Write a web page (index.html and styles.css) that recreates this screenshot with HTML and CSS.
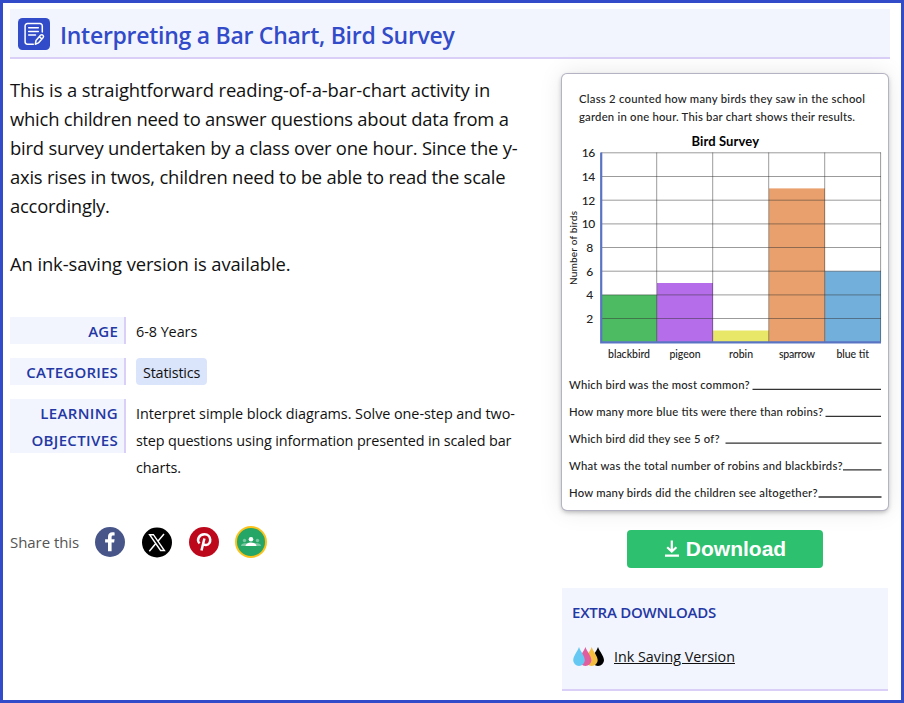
FILE: index.html
```
<!DOCTYPE html>
<html lang="en">
<head>
	<meta charset="UTF-8">
	<title>Interpreting a Bar Chart, Bird Survey</title>
	<link rel="stylesheet" href="styles.css">
</head>
<body>

<div class="page">
	<div class="header">
		<svg class="logo" width="32" height="32" viewBox="0 0 32 32">
			<rect width="32" height="32" rx="4.5" fill="#324bc8"/>
			<g fill="none" stroke="#fff" stroke-width="1.5" stroke-linecap="round" stroke-linejoin="round">
				<path d="M24.3 14V8a2.4 2.4 0 0 0-2.4-2.4H9.500A2.400 2.400 0 0 0 7.100 8v15.800a2.400 2.400 0 0 0 2.400 2.400h5.800"/>
				<path d="M10.700 9.800h9.600M10.700 13.400h9.600M10.700 17h6.800"/>
				<path d="M17.300 26.300l.7-3.800 4.700-5.400q1.300-.9 2.300.2 1 .9.200 2.100l-4.800 5.500zM21.300 18.800l2.500 2.100"/>
			</g>
		</svg>
		<h1>Interpreting a Bar Chart, Bird Survey</h1>
	</div>

	<div class="main">
		<div class="left">
			<div class="intro">
				<p><span class="first-line">This is a straightforward reading-of-a-bar-chart activity in</span><br>which children need to answer questions about data from a<br>bird survey undertaken by a class over one hour. Since the y-<br>axis rises in twos, children need to be able to read the scale<br>accordingly.</p>
				<p class="first-line">An ink-saving version is available.</p>
			</div>

			<div class="info">
				<div class="row">
					<div class="label">AGE</div>
					<div class="value">6-8 Years</div>
				</div>
				<div class="row">
					<div class="label">CATEGORIES</div>
					<div class="value"><a class="tag">Statistics</a></div>
				</div>
				<div class="row">
					<div class="label two-lines">LEARNING<br>OBJECTIVES</div>
					<div class="value">Interpret simple block diagrams. Solve one-step and two-<br><span class="tight">step questions using information presented in scaled bar</span><br>charts.</div>
				</div>
			</div>

			<div class="share">
				<span>Share this</span>
				<!-- facebook -->
				<svg width="32" height="32" viewBox="0 0 32 32">
					<circle cx="16" cy="16" r="15" fill="#475589"/>
					<path d="M14 25.300v-8.700h-2.900v-3.400H14v-2.500c0-2.900 1.700-4.500 4.400-4.500 1.100 0 2.200.2 2.200.2v3h-1.400c-1.200 0-1.600.7-1.600 1.500v2.300h3l-.5 3.400h-2.500v8.700z" fill="#fff"/>
				</svg>
				<!-- x -->
				<svg width="32" height="32" viewBox="0 0 32 32">
					<circle cx="16" cy="16.500" r="15" fill="#000"/>
					<path d="M8.600 8.700h3.800l11 15.800h-3.800z" fill="none" stroke="#fff" stroke-width="1.400"/>
					<path d="M23 8l-6.100 7.200M14.800 17.600L8.300 25.200" stroke="#fff" stroke-width="1.500"/>
				</svg>
				<!-- pinterest -->
				<svg width="32" height="32" viewBox="0 0 32 32">
					<circle cx="16" cy="16" r="15" fill="#bd081c"/>
					<path d="M11.600 17.300c-3.300-3.300-.8-9 5-9 6.900 0 7.500 10.300 1.500 10.700-1.600.1-2.700-.6-3-1.500M16.400 12.500l-2.900 12" fill="none" stroke="#fff" stroke-width="2.500" stroke-linecap="butt"/>
				</svg>
				<!-- classroom -->
				<svg width="32" height="32" viewBox="0 0 32 32">
					<circle cx="16" cy="16" r="15" fill="#25a566" stroke="#fcc21b" stroke-width="2"/>
					<g fill="#79c8a1"><circle cx="9.500" cy="14.500" r="1.700"/><circle cx="22.500" cy="14.500" r="1.700"/><path d="M6 20c0-2 2-2.800 4-2.700h12c2-.1 4 .7 4 2.700z"/></g>
					<circle cx="16" cy="13.200" r="2.300" fill="#fff"/>
					<path d="M10.600 20c0-2.300 2.600-3.500 5.400-3.500s5.400 1.200 5.400 3.500z" fill="#fff"/>
				</svg>
			</div>
		</div>

		<div class="right">
			<div class="sheet">
				<svg width="326" height="436" viewBox="562 74 326 436">
					<g class="sheet-text">
						<text x="579" y="103" textLength="286">Class 2 counted how many birds they saw in the school</text>
						<text x="579" y="120.500" textLength="276">garden in one hour. This bar chart shows their results.</text>
					</g>
					<text class="chart-title" x="691.500" y="146" textLength="67.500">Bird Survey</text>

					<!-- bars -->
					<rect x="601" y="294.900" width="56" height="47" fill="#4dbb62"/>
					<rect x="657" y="283" width="56" height="59" fill="#b56dea"/>
					<rect x="713" y="330.500" width="56" height="12" fill="#e9e767"/>
					<rect x="769" y="188.400" width="56" height="154" fill="#eaa06c"/>
					<rect x="825" y="271.200" width="56" height="71" fill="#72afdb"/>

					<!-- grid -->
					<path class="grid" d="M601 152.800H881M601 176.500H881M601 200.200H881M601 223.900H881M601 247.500H881M601 271.200H881M601 294.900H881M601 318.500H881M656.700 152.500V342M712.700 152.500V342M768.700 152.500V342M824.700 152.500V342M880.600 152.500V342"/>
					<path d="M601.200 152.500V342.300H881" fill="none" stroke="#5a74c4" stroke-width="2.200"/>

					<g class="scale">
						<text x="594.500" y="157">16</text>
						<text x="594.500" y="180.800">14</text>
						<text x="594.500" y="204.500">12</text>
						<text x="594.500" y="228">10</text>
						<text x="592.500" y="251.800">8</text>
						<text x="592.500" y="275.500">6</text>
						<text x="592.500" y="299.200">4</text>
						<text x="592.500" y="322.800">2</text>
					</g>
					<text class="axis" transform="translate(577 285) rotate(-90)" textLength="74">Number of birds</text>

					<g class="names">
						<text x="608" y="358.300" textLength="42">blackbird</text>
						<text x="669.500" y="358.300" textLength="31">pigeon</text>
						<text x="729" y="358.300" textLength="24">robin</text>
						<text x="779" y="358.300" textLength="36">sparrow</text>
						<text x="836.500" y="358.300" textLength="32.500">blue tit</text>
					</g>

					<g class="sheet-text">
						<text x="569" y="388.700" textLength="180.500">Which bird was the most common?</text>
						<text x="569" y="415.800" textLength="254">How many more blue tits were there than robins?</text>
						<text x="569" y="442.800" textLength="150.500">Which bird did they see 5 of?</text>
						<text x="569" y="469.800" textLength="273.500">What was the total number of robins and blackbirds?</text>
						<text x="569" y="496.800" textLength="248.500">How many birds did the children see altogether?</text>
					</g>
					<path d="M752.500 389.300H881M825.500 416.400H881M725.500 443.200H881.500M843 469.900H881.500M818.500 497H881.500" stroke="#333" stroke-width="1.300"/>
				</svg>
			</div>

			<a class="download">
				<svg width="16" height="18" viewBox="0 0 16 18">
					<path d="M7.800 .5v11M3.200 7.200l4.600 4.300 4.600-4.300M1 15.700h14" fill="none" stroke="#fff" stroke-width="2.200"/>
				</svg>
				<span>Download</span>
			</a>

			<div class="extra">
				<h2>EXTRA DOWNLOADS</h2>
				<div class="extra-item">
					<svg width="32" height="20" viewBox="0 0 32 20">
						<path d="M25 0c1.600 4.500 6 9.200 6 13.200a6 5.800 0 0 1-12 0C19 9.200 23.400 4.500 25 0z" fill="#000"/>
						<path d="M18.700 0c1.600 4.500 6 9.200 6 13.200a6 5.800 0 0 1-12 0C12.700 9.200 17.100 4.500 18.700 0z" fill="#f3bd42"/>
						<path d="M12.400 0c1.600 4.500 6 9.200 6 13.200a6 5.800 0 0 1-12 0C6.400 9.200 10.800 4.500 12.400 0z" fill="#e05da0"/>
						<path d="M6 0c1.600 4.500 5.800 9.200 5.800 13.200a5.800 5.800 0 0 1-11.600 0C.2 9.200 4.400 4.500 6 0z" fill="#65c8f2"/>
					</svg>
					<a>Ink Saving Version</a>
				</div>
			</div>
		</div>
	</div>
</div>

</body>
</html>
```
FILE: styles.css
```
*{margin: 0;padding: 0;box-sizing: border-box;}
body{
	font-family: "Open Sans", "Noto Sans", sans-serif;
	color: #111;
	background: #fff;
}
.page{
	width: 904px;
	height: 703px;
	border: 3px solid #324bc8;
	padding: 6px 11px 0 7px;
	overflow: hidden;
}
/* title bar */
.header{
	display: flex;
	align-items: flex-start;
	height: 50px;
	padding: 9px 0 0 8px;
	gap: 10px;
	background: #f2f5fe;
	border-bottom: 2px solid #dacff7;
}
.header h1{
	font-size: 23px;
	line-height: 32px;
	font-weight: 600;
	letter-spacing: -0.27px;
	color: #324bc8;
	padding-top: 1px;
}
.main{
	display: flex;
	justify-content: space-between;
	padding-right: 2px;
}
/* left column */
.left{
	width: 530px;
	padding-top: 16px;
}
.intro{
	font-size: 18.4px;
	line-height: 29px;
	letter-spacing: -0.21px;
	white-space: nowrap;
}
.intro p{
	margin-bottom: 29px;
}
.first-line{
	letter-spacing: -0.1px;
}
.info{
	display: flex;
	flex-direction: column;
	gap: 13px;
	margin-top: 39px;
	font-size: 14.4px;
	line-height: 27px;
	white-space: nowrap;
}
.row{
	display: flex;
	align-items: flex-start;
	gap: 10px;
}
.label{
	width: 116px;
	height: 27px;
	padding: 1px 6px 0 0;
	text-align: right;
	font-weight: 600;
	font-size: 15px;
	letter-spacing: 0.2px;
	color: #2438a4;
	background: #f2f5fe;
	border-right: 2px solid #dacff7;
}
.two-lines{
	height: 54px;
	letter-spacing: 0.35px;
}
.value{
	min-height: 28px;
	padding-top: 1px;
	letter-spacing: -0.05px;
}
.tight{
	letter-spacing: -0.12px;
}
.tag{
	display: block;
	height: 27px;
	margin-top: -1px;
	padding: 1px 7px 0 7px;
	border-radius: 4px;
	letter-spacing: -0.2px;
	background: #dae4fb;
}
.share{
	display: flex;
	align-items: center;
	gap: 15px;
	margin-top: 45px;
	font-size: 15px;
	color: #555;
}
.share span{
	width: 69px;
	white-space: nowrap;
	letter-spacing: -0.05px;
}
/* right column */
.right{
	width: 326px;
	padding-top: 15px;
}
.sheet{
	height: 436px;
	border-radius: 5px;
	background: #fff;
	box-shadow: 0 0 0 1px #b3b3c3, 0 2px 5px rgba(0,0,0,0.3), 0 0 24px rgba(0,0,0,0.1);
}
.sheet svg{
	display: block;
}
.sheet text{
	font-family: Lato, sans-serif;
	fill: #222;
}
.sheet-text text{
	font-size: 11.3px;
	font-weight: 500;
}
.sheet .chart-title{
	font-size: 13px;
	font-weight: bold;
	fill: #000;
}
.grid{
	fill: none;
	stroke: #333;
	stroke-opacity: 0.55;
	stroke-width: 0.9;
}
.scale text{
	font-size: 12px;
	font-weight: 500;
	letter-spacing: -0.6px;
	text-anchor: end;
}
.sheet .axis{
	font-size: 10px;
	font-weight: 500;
}
.names text{
	font-size: 10.5px;
	font-weight: 500;
}
.download{
	display: flex;
	align-items: center;
	justify-content: center;
	gap: 6px;
	width: 196px;
	height: 38px;
	margin: 20px auto 20px 65px;
	border-radius: 4px;
	background: #2dc06e;
	color: #fff;
	font: bold 21px "Liberation Sans", Arial, sans-serif;
}
.extra{
	height: 103px;
	padding: 11px 10px 0;
	background: #f2f5fe;
	border-bottom: 2px solid #dacff7;
}
.extra h2{
	font-size: 15px;
	line-height: 26px;
	font-weight: 600;
	letter-spacing: -0.22px;
	color: #2438a4;
}
.extra-item{
	display: flex;
	align-items: center;
	gap: 9px;
	margin-top: 19px;
	padding-left: 1px;
	font-size: 14.3px;
	line-height: 26px;
}
.extra-item a{
	text-decoration: underline;
}
```
